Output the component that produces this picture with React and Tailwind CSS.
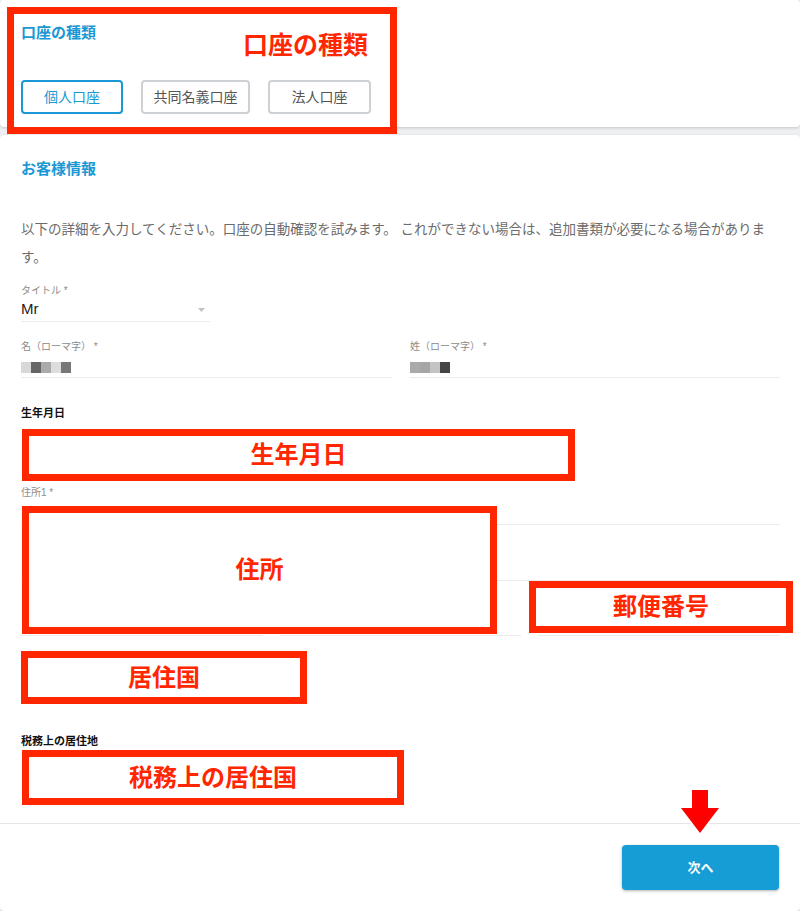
import React, { useState } from 'react';

const JP = "font-['Liberation_Sans','Noto_Sans_CJK_JP',sans-serif]";

const accountTypes = ['個人口座', '共同名義口座', '法人口座'];

// pixelated placeholder for masked name values
const Masked = ({ shades }) => (
    <div className="flex">
        {shades.map((c, i) => (
            <span key={i} className="w-[10px] h-[11px]" style={{ backgroundColor: c }} />
        ))}
    </div>
);

const Label = ({ children }) => (
    <div className="text-[10px] leading-[14px] text-[#8c8c8c]">{children}</div>
);

// red annotation box drawn over the form
const Mark = ({ className, children }) => (
    <div className={`absolute bg-white border-[7px] border-[#ff2600] flex items-center justify-center text-[24px] font-bold text-[#ff2600] leading-none ${className}`}>
        {children}
    </div>
);

const App = () => {
    const [accountType, setAccountType] = useState('個人口座');

    return (
        <div className={`relative w-[800px] h-[911px] overflow-hidden bg-[#eef0f3] flex flex-col gap-2 ${JP}`}>
            {/* account type card */}
            <div className="h-[127px] bg-white rounded-[4px] shadow-[0_1px_3px_rgba(0,0,0,0.18)] pl-[21px] pt-[23px]">
                <h2 className="text-[15px] leading-[20px] font-bold text-[#1a98d5]">口座の種類</h2>
                <div className="flex gap-[18px] mt-[37px]">
                    {accountTypes.map((t) => (
                        <button
                            key={t}
                            onClick={() => setAccountType(t)}
                            className={`h-[34px] rounded-[4px] border-2 text-[14px] ${
                                t === '共同名義口座' ? 'w-[109px]' : t === '法人口座' ? 'w-[103px]' : 'w-[102px]'
                            } ${
                                accountType === t
                                    ? 'border-[#1a98d5] text-[#1a98d5]'
                                    : 'border-[#cdd0d4] text-[#555]'
                            }`}
                        >
                            {t}
                        </button>
                    ))}
                </div>
            </div>

            {/* customer details card */}
            <div className="flex-1 bg-white rounded-[4px] shadow-[0_1px_3px_rgba(0,0,0,0.18)] flex flex-col">
                <div className="pl-[21px] pr-[20px] pt-[24px]">
                    <h2 className="text-[15px] leading-[20px] font-bold text-[#1a98d5]">お客様情報</h2>
                    <p className="mt-[37px] w-[752px] text-[13.5px] leading-[28px] text-[#6b6b6b]">
                        以下の詳細を入力してください。口座の自動確認を試みます。 これができない場合は、追加書類が必要になる場合があります。
                    </p>

                    <div className="mt-[12px] w-[189px]">
                        <Label>タイトル *</Label>
                        <div className="h-[24px] border-b border-[#ececec] flex items-center justify-between pr-[5px]">
                            <span className="text-[15px] text-[#222]">Mr</span>
                            <svg width="7" height="4" viewBox="0 0 7 4">
                                <path d="M0 0h7L3.5 4z" fill="#c2c2c2" />
                            </svg>
                        </div>
                    </div>

                    <div className="mt-[18px] grid grid-cols-[371px_370px] gap-x-[18px]">
                        <div>
                            <Label>名（ローマ字） *</Label>
                            <div className="h-[24px] pt-[8px] border-b border-[#ececec]">
                                <Masked shades={['#d8d8d8', '#666', '#aaa', '#ddd', '#777']} />
                            </div>
                        </div>
                        <div>
                            <Label>姓（ローマ字） *</Label>
                            <div className="h-[24px] pt-[8px] border-b border-[#ececec]">
                                <Masked shades={['#aaa', '#a6a6a6', '#c4c4c4', '#444']} />
                            </div>
                        </div>
                    </div>

                    <div className="mt-[27px] text-[11px] leading-[16px] font-bold text-[#111]">生年月日</div>
                    <div className="h-[65px]" />

                    <Label>住所1 *</Label>
                    <div className="h-[25px] border-b border-[#ececec]" />
                    <div className="h-[56px] border-b border-[#ececec]" />
                    <div className="h-[55px] grid grid-cols-3 gap-x-[17px]">
                        <div className="border-b border-[#ececec]" />
                        <div className="border-b border-[#ececec]" />
                        <div className="border-b border-[#ececec]" />
                    </div>
                    <div className="h-[56px] w-[280px] border-b border-[#ececec]" />

                    <div className="mt-[41px] text-[11px] leading-[16px] font-bold text-[#111]">税務上の居住地</div>
                    <div className="h-[56px]" />
                </div>

                <div className="mt-[18px] border-t border-[#e6e6e6] flex justify-end pt-[21px] pr-[21px]">
                    <button className="w-[157px] h-[45px] rounded-[4px] bg-[#169dd6] text-white text-[13px] font-bold shadow-[0_1px_3px_rgba(0,0,0,0.3)]">
                        次へ
                    </button>
                </div>
            </div>

            {/* annotations */}
            <div className="absolute left-[7px] top-[7px] w-[390px] h-[127px] border-[7px] border-[#ff2600]" />
            <div className="absolute left-[243px] top-[31px] text-[25px] leading-[28px] font-bold text-[#ff2600]">口座の種類</div>
            <Mark className="left-[22px] top-[429px] w-[553px] h-[52px]">生年月日</Mark>
            <Mark className="left-[22px] top-[506px] w-[475px] h-[128px]">住所</Mark>
            <Mark className="left-[529px] top-[581px] w-[264px] h-[52px]">郵便番号</Mark>
            <Mark className="left-[21px] top-[651px] w-[286px] h-[53px]">居住国</Mark>
            <Mark className="left-[22px] top-[750px] w-[382px] h-[55px]">税務上の居住国</Mark>

            <svg className="absolute left-[678px] top-[787px]" width="44" height="50" viewBox="0 0 44 50">
                <path
                    d="M14 3h16v18h11L22 46 3 21h11z"
                    fill="#ff0000"
                    stroke="#fff"
                    strokeWidth="3"
                    strokeLinejoin="round"
                    paintOrder="stroke"
                />
            </svg>
        </div>
    );
};

export default App;
